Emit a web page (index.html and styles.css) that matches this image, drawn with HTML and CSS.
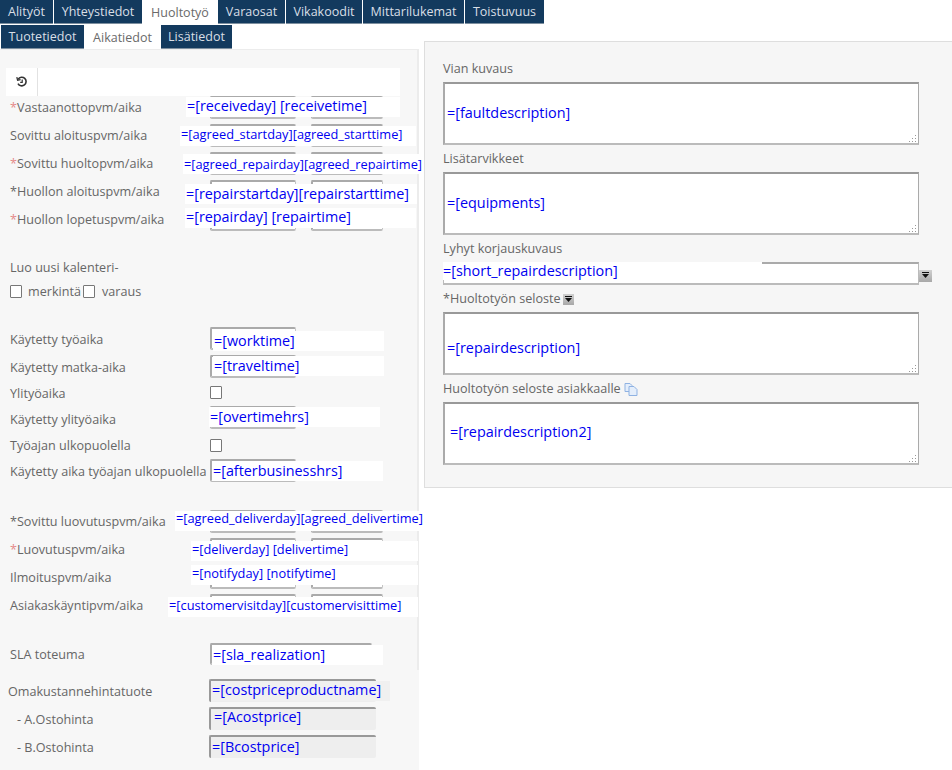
FILE: index.html
```html
<!DOCTYPE html>
<html lang="fi">
<head>
<meta charset="utf-8">
<title>Huoltotyö</title>
<link rel="stylesheet" href="styles.css">
</head>
<body>
<div class="page">
  <nav class="tabs">
    <div class="tabrow">
      <a class="tab w-alityot">Alityöt</a><a class="tab w-yhteys">Yhteystiedot</a><a class="tab active w-huolto">Huoltotyö</a><a class="tab w-varaosat">Varaosat</a><a class="tab w-vika">Vikakoodit</a><a class="tab w-mittari">Mittarilukemat</a><a class="tab w-toistuvuus">Toistuvuus</a>
    </div>
    <div class="tabrow second">
      <a class="tab w-tuote">Tuotetiedot</a><a class="tab active w-aika">Aikatiedot</a><a class="tab w-lisa">Lisätiedot</a>
    </div>
  </nav>

  <main class="left">
    <div class="left-main">
      <div class="toolbar">
        <div class="toolcell">
          <svg width="12" height="12" viewBox="0 0 12 12" fill="none" stroke="#333" stroke-width="1.6"><path d="M2.200 3.200A4.300 4.300 0 1 1 2 7.600"/><path d="M.8 1.200 1.600 4.200 4.600 3.600" stroke-width="1.300"/><path d="M6.200 3.400V6.400H4.200" stroke-width="1.200"/></svg>
        </div>
      </div>

      <div class="row"><label class="lbl"><i>*</i>Vastaanottopvm/aika</label><span class="inp date"></span><span class="inp time"></span><span class="tag t-receive">=[receiveday] [receivetime]</span></div>
      <div class="row"><label class="lbl">Sovittu aloituspvm/aika</label><span class="inp date"></span><span class="inp time"></span><span class="tag small t-start">=[agreed_startday][agreed_starttime]</span></div>
      <div class="row"><label class="lbl"><i>*</i>Sovittu huoltopvm/aika</label><span class="inp date"></span><span class="inp time"></span><span class="tag small t-repair">=[agreed_repairday][agreed_repairtime]</span></div>
      <div class="row"><label class="lbl">*Huollon aloituspvm/aika</label><span class="inp date"></span><span class="inp time"></span><span class="tag t-rstart">=[repairstartday][repairstarttime]</span></div>
      <div class="row"><label class="lbl"><i>*</i>Huollon lopetuspvm/aika</label><span class="inp date"></span><span class="inp time"></span><span class="tag t-rend">=[repairday] [repairtime]</span></div>

      <div class="calendar">
        <div class="calhead">Luo uusi kalenteri-</div>
        <div class="calchecks">
          <span class="box"></span><span class="cal-a">merkintä</span><span class="box"></span><span class="cal-b">varaus</span>
        </div>
      </div>

      <div class="row"><label class="lbl low">Käytetty työaika</label><span class="inp date"></span><span class="tag t-work">=[worktime]</span></div>
      <div class="row"><label class="lbl low">Käytetty matka-aika</label><span class="inp date"></span><span class="tag t-travel">=[traveltime]</span></div>
      <div class="row check"><label class="lbl">Ylityöaika</label><span class="box"></span></div>
      <div class="row"><label class="lbl lower">Käytetty ylityöaika</label><span class="inp date"></span><span class="tag t-over">=[overtimehrs]</span></div>
      <div class="row check second-check"><label class="lbl">Työajan ulkopuolella</label><span class="box"></span></div>
      <div class="row"><label class="lbl low">Käytetty aika työajan ulkopuolella</label><span class="inp date"></span><span class="tag t-after">=[afterbusinesshrs]</span></div>

      <div class="group-delivery">
        <div class="row"><label class="lbl">*Sovittu luovutuspvm/aika</label><span class="inp date"></span><span class="inp time"></span><span class="tag small t-adel">=[agreed_deliverday][agreed_delivertime]</span></div>
        <div class="row"><label class="lbl"><i>*</i>Luovutuspvm/aika</label><span class="inp date"></span><span class="inp time"></span><span class="tag small t-del">=[deliverday] [delivertime]</span></div>
        <div class="row"><label class="lbl">Ilmoituspvm/aika</label><span class="inp date"></span><span class="inp time"></span><span class="tag small t-not">=[notifyday] [notifytime]</span></div>
        <div class="row"><label class="lbl">Asiakaskäyntipvm/aika</label><span class="inp date"></span><span class="inp time"></span><span class="tag small t-visit">=[customervisitday][customervisittime]</span></div>
      </div>

      <div class="row sla"><label class="lbl">SLA toteuma</label><span class="inp wide"></span><span class="tag t-sla">=[sla_realization]</span></div>
    </div>
    <div class="left-cost">
      <div class="row"><label class="lbl out">Omakustannehintatuote</label><span class="inp wide ro"></span><span class="tag ro-tag t-cost">=[costpriceproductname]</span></div>
      <div class="row"><label class="lbl indent">- A.Ostohinta</label><span class="inp wide ro"></span><span class="tag ro-tag t-a">=[Acostprice]</span></div>
      <div class="row"><label class="lbl indent">- B.Ostohinta</label><span class="inp wide ro"></span><span class="tag ro-tag t-b">=[Bcostprice]</span></div>
    </div>
  </main>

  <aside class="right">
    <div class="flabel">Vian kuvaus</div>
    <div class="area"><span class="val v-fault">=[faultdescription]</span><svg class="grip" width="8" height="8" viewBox="0 0 8 8" fill="#999"><path d="M6 0h1v1H6zM6 3h1v1H6zM3 3h1v1H3zM6 6h1v1H6zM3 6h1v1H3zM0 6h1v1H0z"/></svg></div>
    <div class="flabel">Lisätarvikkeet</div>
    <div class="area"><span class="val v-fault">=[equipments]</span><svg class="grip" width="8" height="8" viewBox="0 0 8 8" fill="#999"><path d="M6 0h1v1H6zM6 3h1v1H6zM3 3h1v1H3zM6 6h1v1H6zM3 6h1v1H3zM0 6h1v1H0z"/></svg></div>
    <div class="flabel">Lyhyt korjauskuvaus</div>
    <div class="shortrow">
      <div class="short"><span class="short-val">=[short_repairdescription]</span></div>
      <span class="drop"><svg width="9" height="7" viewBox="0 0 9 7" fill="#111"><path d="M1 0h7v1H1zM1 2h7L4.500 6z"/></svg></span>
    </div>
    <div class="flabel">*Huoltotyön seloste<span class="drop small-drop"><svg width="9" height="7" viewBox="0 0 9 7" fill="#111"><path d="M1 0h7v1H1zM1 2h7L4.500 6z"/></svg></span></div>
    <div class="area"><span class="val v-repair">=[repairdescription]</span><svg class="grip" width="8" height="8" viewBox="0 0 8 8" fill="#999"><path d="M6 0h1v1H6zM6 3h1v1H6zM3 3h1v1H3zM6 6h1v1H6zM3 6h1v1H3zM0 6h1v1H0z"/></svg></div>
    <div class="flabel">Huoltotyön seloste asiakkaalle<svg class="copy" width="14" height="14" viewBox="0 0 14 14" fill="#e4eefb" stroke="#8fb2e2"><path d="M1 1.500h5l2 2v6H1z"/><path d="M5 4.500h5l3 3v6H5z"/></svg></div>
    <div class="area"><span class="val v-repair2">=[repairdescription2]</span><svg class="grip" width="8" height="8" viewBox="0 0 8 8" fill="#999"><path d="M6 0h1v1H6zM6 3h1v1H6zM3 3h1v1H3zM6 6h1v1H6zM3 6h1v1H3zM0 6h1v1H0z"/></svg></div>
  </aside>
</div>
</body>
</html>
```

FILE: styles.css
```css
* { box-sizing: border-box; }
html, body { margin: 0; padding: 0; background: #fff; }
body { font-family: "Open Sans", "Noto Sans", sans-serif; font-size: 12.6px; color: #666; overflow: hidden; }

.page {
  display: grid;
  grid-template-columns: 424px 528px;
  grid-template-rows: 41px 8px 721px;
  width: 952px;
  height: 770px;
  overflow: hidden;
}

.tabs { grid-column: 1 / 3; grid-row: 1 / 3; position: relative; z-index: 1; }
.tabrow { display: flex; height: 25px; }
.tabrow.second { height: 24px; padding-left: 1px; }
.tab {
  display: flex;
  align-items: center;
  justify-content: center;
  height: 24px;
  margin-right: 1px;
  background: #133a5e;
  color: #d9dfe6;
  border-bottom: 1px solid #7d8f9f;
  font-size: 12.5px;
}
.tab.active { background: #fff; color: #6a6a6a; border-bottom: 0; }
.w-alityot { width: 53px; }
.w-yhteys { width: 88px; }
.w-huolto { width: 74px; }
.w-varaosat { width: 67px; }
.w-vika { width: 76px; }
.w-mittari { width: 101px; }
.w-toistuvuus { width: 79px; }
.w-tuote { width: 83px; }
.w-aika { width: 75px; }
.w-lisa { width: 71px; }

.left { grid-column: 1; grid-row: 3; width: 419px; background: #f7f7f7; border-top: 1px solid #ececec; }
.left-main { height: 620px; padding-top: 18px; border-right: 2px solid #ececec; }
.left-cost { padding-top: 9px; }
.left-cost .lbl { height: 24px; padding-top: 1px; }

.toolbar { display: flex; width: 394px; height: 28px; margin-left: 6px; background: #fff; }
.toolcell { display: flex; align-items: center; justify-content: center; width: 32px; height: 28px; border-right: 1px solid #e2e2e2; }

.row { position: relative; display: flex; height: 28px; }
.lbl { display: block; flex: none; width: 210px; height: 23px; padding-left: 10px; line-height: 23px; white-space: nowrap; color: #666; }
.lbl i { font-style: normal; color: #e58a8a; }
.lbl.low { line-height: 25px; }
.lbl.lower { line-height: 27px; }
.left-cost .lbl.out { padding-left: 8px; }
.left-cost .lbl.indent { padding-left: 17px; }

.inp {
  display: block;
  flex: none;
  height: 23px;
  background: #fff;
  border: 1px solid #c4c4c4;
  border-top: 2px solid #aaa;
  border-left: 2px solid #aaa;
  border-bottom: 2px solid #bbb;
  border-radius: 2px;
}
.date { width: 86px; }
.time { width: 72px; margin-left: 15px; }
.wide { width: 162px; }
.ro { width: 167px; margin-left: -1px; background: #eee; border-right: 0; border-bottom: 0; border-top-color: #999; border-left-color: #999; }

.tag {
  position: absolute;
  display: block;
  height: 20px;
  padding-left: 1px;
  background: #fff;
  color: #0000f0;
  font-size: 14.35px;
  line-height: 20px;
  white-space: nowrap;
}
.tag.small { font-size: 12.8px; }
.ro-tag { background: #f0f0f0; }

.t-receive { left: 186px; top: 1px; width: 214px; line-height: 18px; }
.t-start { left: 180px; top: 2px; width: 236px; line-height: 16px; }
.t-repair { left: 183px; top: 2px; width: 239px; }
.t-rstart { left: 185px; top: 4px; width: 232px; line-height: 20px; }
.t-rend { left: 185px; top: 0; width: 231px; line-height: 18px; }
.t-work { left: 213px; top: 4px; width: 171px; }
.t-travel { left: 213px; top: 1px; width: 171px; }
.t-over { left: 209px; top: 1px; width: 171px; }
.t-after { left: 212px; top: 2px; width: 171px; }
.t-adel { left: 175px; top: 1px; width: 249px; line-height: 15px; }
.t-del { left: 191px; top: 3px; width: 227px; line-height: 16px; }
.t-not { left: 191px; top: -1px; width: 227px; line-height: 16px; }
.t-visit { left: 168px; top: 3px; width: 250px; line-height: 16px; }
.t-sla { left: 212px; top: 2px; width: 171px; }
.t-cost { left: 211px; top: 2px; width: 179px; line-height: 18px; }
.t-a { left: 213px; top: 2px; width: 162px; background: #eee; line-height: 16px; }
.t-b { left: 211px; top: 2px; width: 164px; background: #eee; }

.calendar { margin-top: 19px; height: 72px; padding-left: 10px; }
.calhead { height: 24px; line-height: 26px; }
.calchecks { display: flex; align-items: center; height: 24px; }
.box { display: block; flex: none; width: 12px; height: 13px; background: #fff; border: 1px solid #777; border-radius: 1px; }
.cal-a { margin-left: 6px; width: 55px; }
.cal-b { margin-left: 7px; }

.row.check { height: 23px; }
.row.check .lbl { height: 20px; line-height: 22px; }
.row.check .box { margin-top: 3px; }
.row.second-check { height: 25px; }
.row.second-check .box { margin-top: 5px; }
.row.second-check .lbl { margin-top: 1px; }

.group-delivery { margin-top: 23px; }
.row.sla { margin-top: 21px; height: 22px; }
.row.sla .lbl { line-height: 24px; }
.sla .inp { height: 22px; }

.right {
  grid-column: 2;
  grid-row: 2 / 4;
  align-self: start;
  width: 529px;
  height: 447px;
  padding: 18px 0 0 18px;
  background: #f6f6f6;
  border: 1px solid #dedede;
  position: relative;
  z-index: 0;
}
.flabel { display: flex; align-items: center; height: 18px; line-height: 18px; color: #666; margin-bottom: 4px; }
.area {
  position: relative;
  display: flex;
  align-items: center;
  width: 476px;
  height: 63px;
  margin-bottom: 5px;
  padding-left: 2px;
  background: #fff;
  border: 1px solid #aaa;
  border-top: 2px solid #999;
  border-left: 2px solid #aaa;
  border-bottom: 2px solid #bbb;
  color: #0000f0;
  font-size: 14.4px;
}
.val { white-space: nowrap; }
.v-fault { padding-bottom: 2px; }
.v-repair { padding-top: 8px; }
.v-repair2 { margin-left: 3px; padding-bottom: 4px; }
.grip { position: absolute; right: 1px; bottom: 0; }

.shortrow { display: flex; align-items: center; height: 23px; margin-bottom: 5px; }
.short { width: 476px; height: 23px; background: #fff; border: 1px solid #bbb; border-top: 2px solid #aaa; border-bottom: 2px solid #bbb; color: #0000f0; font-size: 14.4px; line-height: 16px; }
.short-val { display: block; width: 319px; height: 18px; margin: -2px 0 0 -1px; padding-top: 1px; background: #fff; white-space: nowrap; }
.drop { display: flex; align-items: center; justify-content: center; flex: none; width: 13px; height: 12px; margin-top: 4px; background: linear-gradient(#d0d0d0, #a8a8a8); }
.shortrow .drop { margin-left: 0; }
.small-drop { margin: 1px 0 0 2px; width: 11px; height: 11px; }
.copy { margin-left: 3px; }
```
